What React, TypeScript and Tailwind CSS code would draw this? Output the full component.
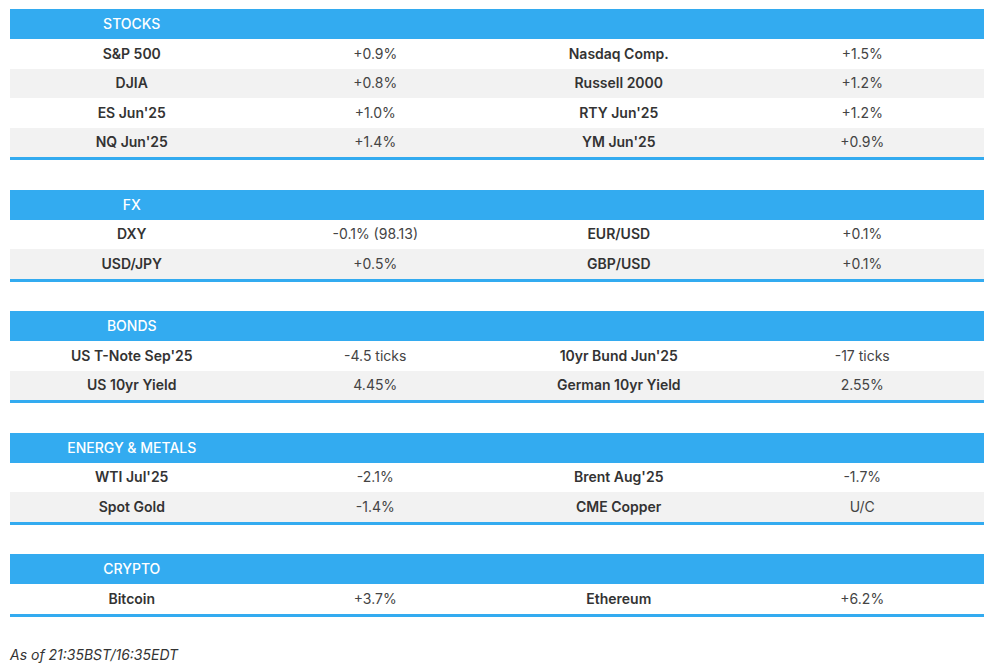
type Row = [string, string, string, string];

interface Section {
  title: string;
  rows: Row[];
}

const sections: Section[] = [
  {
    title: 'STOCKS',
    rows: [
      ['S&P 500', '+0.9%', 'Nasdaq Comp.', '+1.5%'],
      ['DJIA', '+0.8%', 'Russell 2000', '+1.2%'],
      ["ES Jun'25", '+1.0%', "RTY Jun'25", '+1.2%'],
      ["NQ Jun'25", '+1.4%', "YM Jun'25", '+0.9%'],
    ],
  },
  {
    title: 'FX',
    rows: [
      ['DXY', '-0.1% (98.13)', 'EUR/USD', '+0.1%'],
      ['USD/JPY', '+0.5%', 'GBP/USD', '+0.1%'],
    ],
  },
  {
    title: 'BONDS',
    rows: [
      ["US T-Note Sep'25", '-4.5 ticks', "10yr Bund Jun'25", '-17 ticks'],
      ['US 10yr Yield', '4.45%', 'German 10yr Yield', '2.55%'],
    ],
  },
  {
    title: 'ENERGY & METALS',
    rows: [
      ["WTI Jul'25", '-2.1%', "Brent Aug'25", '-1.7%'],
      ['Spot Gold', '-1.4%', 'CME Copper', 'U/C'],
    ],
  },
  {
    title: 'CRYPTO',
    rows: [['Bitcoin', '+3.7%', 'Ethereum', '+6.2%']],
  },
];

const MarketTable = ({ title, rows }: Section) => (
  <div className="border-b-[3px] border-[#33abf0]">
    <div className="grid h-[30px] grid-cols-4 items-center bg-[#33abf0]">
      <div className="text-center text-sm font-medium text-white">{title}</div>
    </div>
    {rows.map((row, i) => (
      <div
        key={row[0]}
        className={`grid h-[29.5px] grid-cols-4 items-center text-sm ${i % 2 === 1 ? 'bg-[#f2f2f2]' : 'bg-white'}`}
      >
        <div className="text-center font-semibold text-[#333]">{row[0]}</div>
        <div className="text-center text-[#444]">{row[1]}</div>
        <div className="text-center font-semibold text-[#333]">{row[2]}</div>
        <div className="text-center text-[#444]">{row[3]}</div>
      </div>
    ))}
  </div>
);

const App = () => {
  return (
    <div className="min-h-[666px] bg-white pt-[9px] font-['Inter','Liberation_Sans',sans-serif]">
      <div className="ml-[10px] flex w-[974px] flex-col gap-[29.5px]">
        {sections.map((s) => (
          <MarketTable key={s.title} {...s} />
        ))}
      </div>
      <p className="ml-[10px] mt-[28px] text-sm italic text-[#333]">As of 21:35BST/16:35EDT</p>
    </div>
  );
};

export default App;
